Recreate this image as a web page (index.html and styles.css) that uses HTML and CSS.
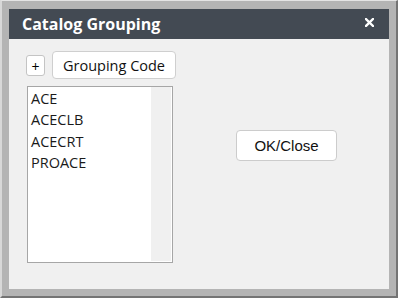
FILE: index.html
```html
<!DOCTYPE html>
<html lang="en">
<head>
    <meta charset="UTF-8">
    <title>Catalog Grouping</title>
    <link rel="stylesheet" href="styles.css">
</head>
<body>

    <div class="frame">
        <div class="dialog">
            <div class="title-bar">
                <span class="title">Catalog Grouping</span>
                <span class="close" title="Close">
                    <svg width="9" height="9" viewBox="0 0 9 9">
                        <path d="M1 1 L8 8 M8 1 L1 8" stroke="#fff" stroke-width="2.4" stroke-linecap="square"/>
                    </svg>
                </span>
            </div>

            <div class="content">
                <div class="toolbar">
                    <button class="btn btn-small">+</button>
                    <button class="btn btn-group">Grouping Code</button>
                </div>

                <div class="main-row">
                    <div class="list-box">
                        <ul class="items">
                            <li>ACE</li>
                            <li>ACECLB</li>
                            <li>ACECRT</li>
                            <li>PROACE</li>
                        </ul>
                        <div class="track"></div>
                    </div>
                    <button class="btn btn-ok">OK/Close</button>
                </div>
            </div>
        </div>
    </div>

</body>
</html>
```

FILE: styles.css
```css
html, body {
    margin: 0;
    padding: 0;
}
body {
    font-family: 'Open Sans', 'Noto Sans', sans-serif;
    color: #1a1a1a;
}
.frame {
    box-sizing: border-box;
    width: 398px;
    height: 298px;
    background-color: #b4b4b4;
    border-top: 1px solid #e4e4e4;
    border-left: 2px solid #d8d8d8;
    border-right: 2px solid #747474;
    border-bottom: 2px solid #747474;
    padding: 8px 7px 7px 7px;
}
.dialog {
    width: 380px;
    height: 280px;
    display: flex;
    flex-direction: column;
    background-color: #f0f0f0;
}
.title-bar {
    height: 30px;
    flex: none;
    background-color: #434a53;
    display: flex;
    align-items: center;
    justify-content: space-between;
    padding: 0 16px 0 13px;
}
.title {
    color: #fff;
    font-weight: bold;
    font-size: 16px;
    line-height: 30px;
}
.close {
    display: flex;
    margin-top: -4px;
    margin-right: -1px;
}
.content {
    padding: 12px 0 0 17px;
}
.toolbar {
    display: flex;
    align-items: center;
    gap: 7px;
}
.btn {
    font-family: 'Open Sans', 'Noto Sans', sans-serif;
    background-color: #fff;
    border: 1px solid #cfcfcf;
    border-radius: 4px;
    color: #111;
    padding: 0;
    margin: 0;
}
.btn-small {
    width: 19px;
    height: 21px;
    font-size: 14px;
    line-height: 22px;
    color: #000;
    border-radius: 3px;
    border-color: #c4c4c4;
}
.btn-group {
    width: 124px;
    height: 28px;
    font-size: 14.5px;
}
.main-row {
    display: flex;
    align-items: flex-start;
    margin-top: 7px;
}
.list-box {
    box-sizing: border-box;
    width: 146px;
    height: 177px;
    margin-left: 1px;
    border: 1px solid #a6a6a6;
    background-color: #fff;
    display: flex;
}
.items {
    list-style: none;
    margin: 0;
    padding: 1px 0 0 3px;
    flex: 1;
    font-size: 14.5px;
    line-height: 21.4px;
}
.track {
    width: 20px;
    margin: 0 1px 1px 0;
    background-color: #f0f0f0;
}
.btn-ok {
    font-family: 'Liberation Sans', Arial, sans-serif;
    width: 101px;
    height: 31px;
    margin-left: 63px;
    margin-top: 44px;
    font-size: 15px;
    border-color: #cccccc;
}
```
